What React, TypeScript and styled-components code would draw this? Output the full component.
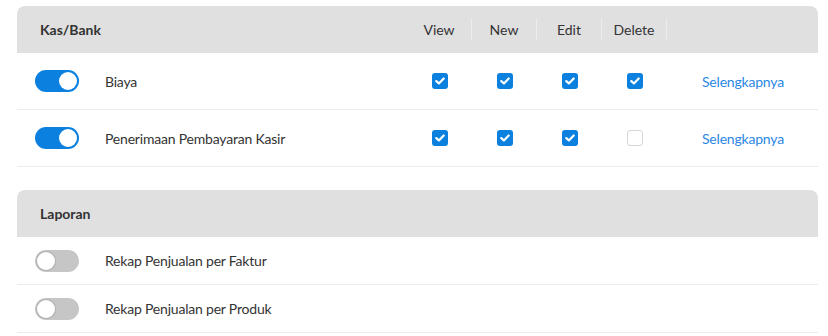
import React from 'react';
import styled, { createGlobalStyle } from 'styled-components';

const GlobalStyle = createGlobalStyle`
  body {
    margin: 0;
    background: #ffffff;
    font-family: Lato, 'Open Sans', sans-serif;
    color: #333333;
  }
`;

const Page = styled.div`
  display: flex;
  flex-direction: column;
  gap: 23px;
  padding: 6px 10px 0 17px;
`;

const Card = styled.section`
  display: flex;
  flex-direction: column;
`;

const COLUMNS = '18px 70px 1fr 65px 65px 65px 65px 151px';

const HeaderRow = styled.div`
  display: grid;
  grid-template-columns: ${COLUMNS};
  align-items: center;
  height: 47px;
  background: #e0e0e0;
  border-radius: 8px 8px 0 0;
`;

const SectionTitle = styled.div`
  grid-column: 2 / 4;
  padding-left: 5px;
  font-size: 14px;
  font-weight: 700;
  color: #333333;
`;

const ColumnTitle = styled.div`
  height: 23px;
  display: flex;
  align-items: center;
  justify-content: center;
  font-size: 14px;
  color: #333333;
  border-right: 1px solid #ececec;
`;

const Row = styled.div<{ $tall?: boolean }>`
  display: grid;
  grid-template-columns: ${COLUMNS};
  align-items: center;
  height: ${({ $tall }) => ($tall ? '56px' : '47px')};
  border-bottom: 1px solid #ececec;
`;

const Label = styled.div`
  font-size: 14px;
  letter-spacing: -0.2px;
  color: #333333;
`;

const Toggle = styled.span<{ $on?: boolean }>`
  grid-column: 2;
  position: relative;
  display: block;
  width: 44px;
  height: 22px;
  border-radius: 11px;
  background: ${({ $on }) => ($on ? '#0b80df' : '#c6c6c6')};

  &::after {
    content: '';
    position: absolute;
    top: 2px;
    left: ${({ $on }) => ($on ? '24px' : '2px')};
    width: 18px;
    height: 18px;
    border-radius: 50%;
    background: #ffffff;
    box-shadow: ${({ $on }) => ($on ? 'none' : '0 0 1px 1px rgba(0, 0, 0, 0.12)')};
  }
`;

const CheckCell = styled.div`
  display: flex;
  justify-content: center;
`;

const Box = styled.span<{ $checked?: boolean }>`
  display: flex;
  align-items: center;
  justify-content: center;
  width: 16px;
  height: 16px;
  box-sizing: border-box;
  border-radius: 3px;
  background: ${({ $checked }) => ($checked ? '#0b80df' : '#ffffff')};
  border: ${({ $checked }) => ($checked ? 'none' : '1px solid #d6d6d6')};
`;

const MoreLink = styled.a`
  padding-left: 35px;
  font-size: 14px;
  letter-spacing: -0.2px;
  color: #2a88e3;
  text-decoration: none;
`;

const Check = () => (
  <svg width='10' height='8' viewBox='0 0 10 8' fill='none'>
    <path
      d='M1.3 4.1 L3.9 6.4 L8.7 1.5'
      stroke='#ffffff'
      strokeWidth='2.2'
      strokeLinecap='round'
      strokeLinejoin='round'
    />
  </svg>
);

interface Access {
  name: string;
  enabled: boolean;
  rights?: boolean[];
}

const kasBank: Access[] = [
  { name: 'Biaya', enabled: true, rights: [true, true, true, true] },
  { name: 'Penerimaan Pembayaran Kasir', enabled: true, rights: [true, true, true, false] }
];

const laporan: Access[] = [
  { name: 'Rekap Penjualan per Faktur', enabled: false },
  { name: 'Rekap Penjualan per Produk', enabled: false }
];

function App (): React.ReactElement {
  return (
    <>
      <GlobalStyle />
      <Page>
        <Card>
          <HeaderRow>
            <SectionTitle>Kas/Bank</SectionTitle>
            <ColumnTitle>View</ColumnTitle>
            <ColumnTitle>New</ColumnTitle>
            <ColumnTitle>Edit</ColumnTitle>
            <ColumnTitle>Delete</ColumnTitle>
          </HeaderRow>
          {kasBank.map((item) => (
            <Row $tall key={item.name}>
              <Toggle $on={item.enabled} />
              <Label>{item.name}</Label>
              {item.rights?.map((checked, i) => (
                <CheckCell key={i}>
                  <Box $checked={checked}>{checked && <Check />}</Box>
                </CheckCell>
              ))}
              <MoreLink href='#'>Selengkapnya</MoreLink>
            </Row>
          ))}
        </Card>

        <Card>
          <HeaderRow>
            <SectionTitle>Laporan</SectionTitle>
          </HeaderRow>
          {laporan.map((item) => (
            <Row key={item.name}>
              <Toggle $on={item.enabled} />
              <Label>{item.name}</Label>
            </Row>
          ))}
        </Card>
      </Page>
    </>
  );
}

export default App;
